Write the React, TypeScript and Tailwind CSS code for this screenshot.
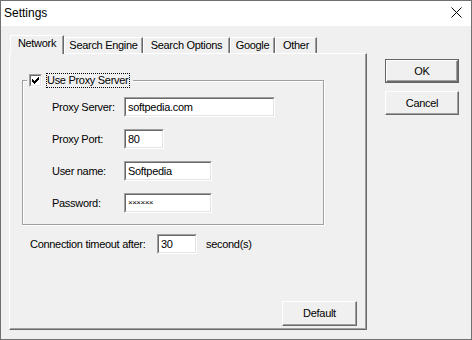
import React from "react";

const raised =
  "border-t border-l border-t-white border-l-white border-r border-b border-r-[#696969] border-b-[#696969] shadow-[inset_-1px_-1px_0_#a0a0a0]";

function Tab({ label, selected, w }: { label: string; selected?: boolean; w: string }) {
  return selected ? (
    <div
      className={`relative z-10 -mb-px h-[19px] ${w} bg-[#f0f0f0] border-t border-l border-t-white border-l-white border-r border-r-[#696969] shadow-[inset_-1px_0_0_#a0a0a0] flex justify-center pt-[2px]`}
    >
      {label}
    </div>
  ) : (
    <div
      className={`h-[16px] ${w} border-t border-l border-t-white border-l-white border-r border-r-[#696969] shadow-[inset_-1px_0_0_#a0a0a0] flex justify-center pt-[2px]`}
    >
      {label}
    </div>
  );
}

function Input({ value, w, small }: { value: string; w: string; small?: boolean }) {
  return (
    <div className={`h-[20px] ${w} border-t border-l border-t-[#a0a0a0] border-l-[#a0a0a0] border-b border-r border-b-white border-r-white`}>
      <div className="h-full w-full bg-white border-t border-l border-t-[#696969] border-l-[#696969] border-b border-r border-b-[#e3e3e3] border-r-[#e3e3e3] flex items-center pl-[2px]">
        {small ? <span className="text-[8px] tracking-[-0.5px] leading-none pb-[1px]">××××××</span> : value}
      </div>
    </div>
  );
}

function Button({ label, w, h, def }: { label: string; w: string; h: string; def?: boolean }) {
  const inner = (
    <div className={`h-full w-full bg-[#f0f0f0] ${raised} flex items-center justify-center`}>{label}</div>
  );
  return def ? (
    <div className={`${w} ${h} border border-[#646464]`}>{inner}</div>
  ) : (
    <div className={`${w} ${h}`}>{inner}</div>
  );
}

function Row({ label, children }: { label: string; children: React.ReactNode }) {
  return (
    <div className="flex items-center h-[20px]">
      <div className="w-[72px]">{label}</div>
      {children}
    </div>
  );
}

export default function App() {
  return (
    <div className="w-[472px] h-[340px] bg-[#f0f0f0] border border-[#707070] flex flex-col font-['Liberation_Sans',Arial,sans-serif] text-[11px] tracking-[-0.3px] text-black leading-none overflow-hidden">
      <div className="h-[25px] bg-white flex items-center justify-between pl-[3px] pr-[9px] tracking-normal">
        <span className="text-[12px] pb-[2px]">Settings</span>
        <svg width="11" height="11" viewBox="0 0 11 11" className="mb-[2px]">
          <path d="M0.5 0.5 L10.5 10.5 M10.5 0.5 L0.5 10.5" stroke="#000" strokeWidth="1" />
        </svg>
      </div>
      <div className="flex flex-1 pl-[8px] pt-[9px]">
        <div className="w-[358px] flex flex-col">
          <div className="h-[18px] flex items-end pl-[1px]">
            <Tab label="Network" selected w="w-[54px]" />
            <Tab label="Search Engine" w="w-[79px]" />
            <Tab label="Search Options" w="w-[87px]" />
            <Tab label="Google" w="w-[45px]" />
            <Tab label="Other" w="w-[42px]" />
          </div>
          <div className={`h-[277px] bg-[#f0f0f0] ${raised} flex flex-col`}>
            <div className="relative mt-[26px] ml-[12px] w-[302px] h-[145px] border border-[#a0a0a0] shadow-[1px_1px_0_white,inset_1px_1px_0_white] pt-[16px] pl-[29px] flex flex-col gap-[12px]">
              <div className="absolute left-[4px] -top-[8px] h-[15px] bg-[#f0f0f0] pl-[2px] pr-[3px] flex items-center">
                <div className="w-[13px] h-[13px] border-t border-l border-t-[#a0a0a0] border-l-[#a0a0a0] border-b border-r border-b-white border-r-white">
                  <div className="w-full h-full bg-white border-t border-l border-t-[#696969] border-l-[#696969] border-b border-r border-b-[#e3e3e3] border-r-[#e3e3e3]">
                    <svg width="9" height="9" viewBox="0 0 9 9" shapeRendering="crispEdges">
                      <path
                        d="M1 3h1v3h-1z M2 4h1v3h-1z M3 5h1v3h-1z M4 4h1v3h-1z M5 3h1v3h-1z M6 2h1v3h-1z M7 1h1v3h-1z"
                        fill="#000"
                      />
                    </svg>
                  </div>
                </div>
                <div className="ml-[4px] h-[15px] w-[84px] border border-dotted border-black flex items-center">
                  Use Proxy Server
                </div>
              </div>
              <Row label="Proxy Server:">
                <Input value="softpedia.com" w="w-[151px]" />
              </Row>
              <Row label="Proxy Port:">
                <Input value="80" w="w-[40px]" />
              </Row>
              <Row label="User name:">
                <Input value="Softpedia" w="w-[88px]" />
              </Row>
              <Row label="Password:">
                <Input value="" small w="w-[88px]" />
              </Row>
            </div>
            <div className="mt-[9px] ml-[20px] flex items-center h-[20px]">
              <div className="w-[127px]">Connection timeout after:</div>
              <Input value="30" w="w-[40px]" />
              <div className="ml-[9px]">second(s)</div>
            </div>
            <div className="mt-auto mb-[3px] mr-[9px] flex justify-end">
              <Button label="Default" w="w-[75px]" h="h-[25px]" />
            </div>
          </div>
        </div>
        <div className="ml-[18px] pt-[24px] flex flex-col gap-[8px]">
          <Button label="OK" def w="w-[74px]" h="h-[24px]" />
          <Button label="Cancel" w="w-[74px]" h="h-[24px]" />
        </div>
      </div>
    </div>
  );
}
